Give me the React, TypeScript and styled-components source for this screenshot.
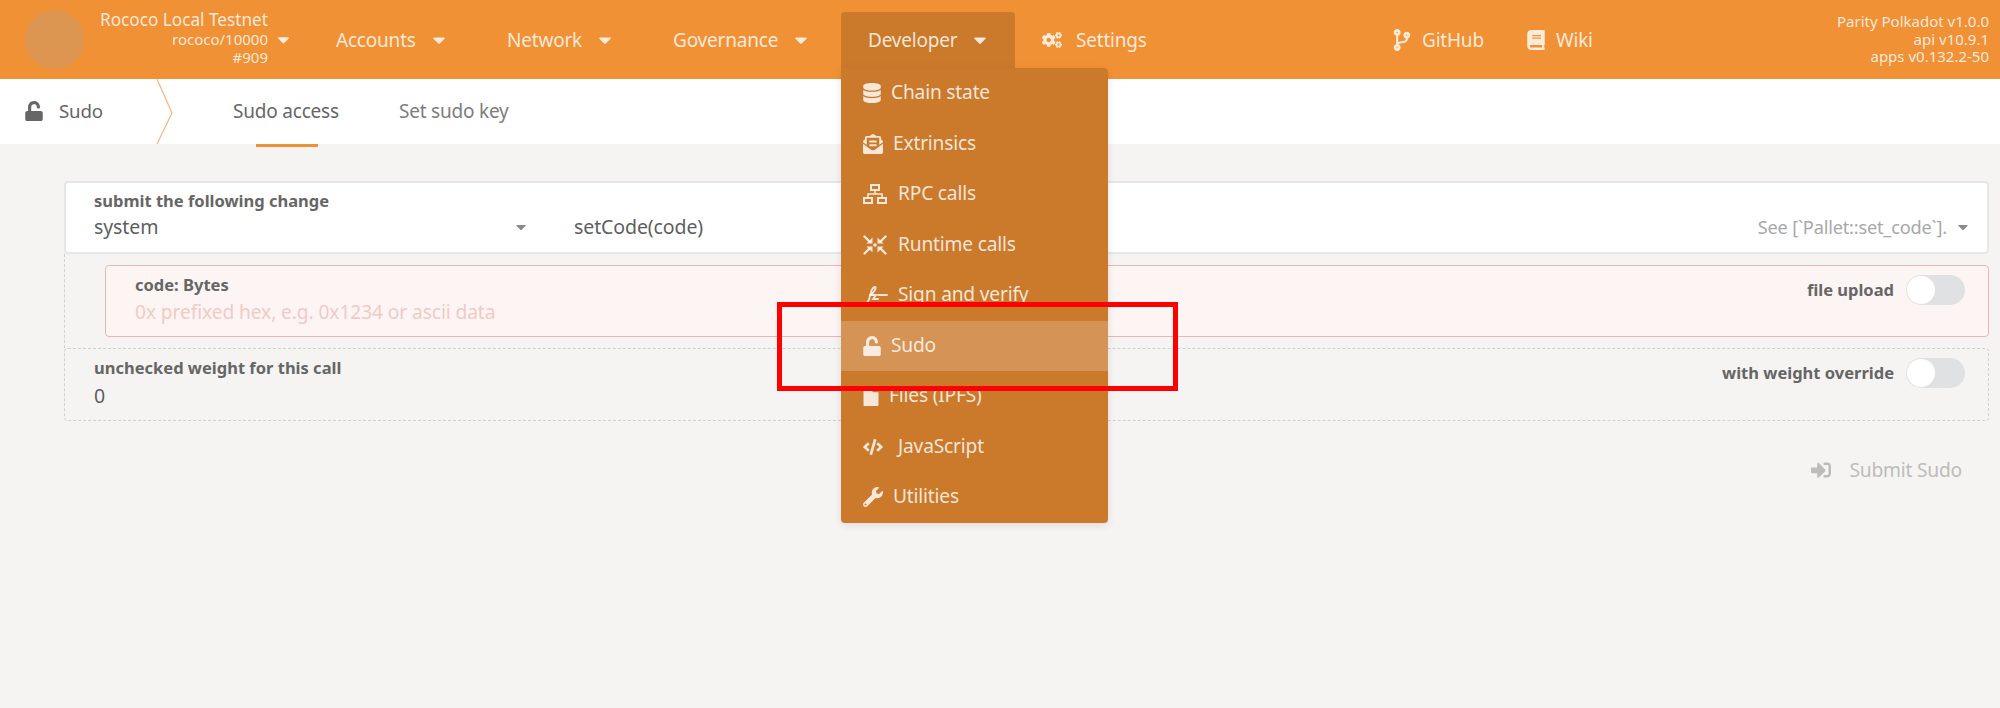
import * as React from 'react'
import styled, { createGlobalStyle } from 'styled-components'
import {
  FaBook, FaCaretDown, FaCode, FaCodeBranch, FaCogs, FaDatabase, FaEnvelopeOpenText,
  FaFile, FaSignInAlt, FaUnlock, FaWrench,
} from 'react-icons/fa'

const Global = createGlobalStyle`
  html, body { margin: 0; padding: 0; background: #f5f4f3; }
  body { font-family: "Noto Sans", "Open Sans", sans-serif; color: #5e5e5e; }
`

const Page = styled.div`
  position: relative;
  width: 2000px;
  height: 708px;
  overflow: hidden;
  background: #f5f4f3;
`

const Header = styled.header`
  display: flex;
  align-items: center;
  height: 79px;
  padding: 0 11px 0 25px;
  box-sizing: border-box;
  background: #f19135;
  color: rgba(255, 255, 255, 0.82);
  font-size: 19px;
  letter-spacing: -0.2px;
`

const Logo = styled.div`
  width: 59px;
  height: 59px;
  border-radius: 50%;
  background: #dd9552;
  margin-right: 15px;
`

const ChainInfo = styled.div`
  display: flex;
  flex-direction: column;
  align-items: flex-end;
  width: 169px;
  font-size: 15px;
  letter-spacing: 0;
  line-height: 18.5px;
  white-space: nowrap;
  margin-top: -1px;
`

const ChainName = styled.div`
  font-size: 17.2px;
`

const ChainRow = styled.div`
  position: relative;
`

const ChainCaret = styled(FaCaretDown)`
  position: absolute;
  left: calc(100% + 6px);
  top: 0;
  width: 19px;
  height: 19px;
`

const NavItem = styled.div<{ $w: number; $active?: boolean; $ml?: number }>`
  display: flex;
  align-items: center;
  gap: 13px;
  box-sizing: border-box;
  width: ${(p) => p.$w}px;
  margin-left: ${(p) => p.$ml ?? 0}px;
  padding-left: 27px;
  padding-bottom: ${(p) => (p.$active ? '12px' : '0')};
  white-space: nowrap;
  height: ${(p) => (p.$active ? '67px' : '79px')};
  align-self: flex-end;
  background: ${(p) => (p.$active ? '#cb7a2b' : 'transparent')};
  border-radius: 4px 4px 0 0;
`

const NavCaret = styled(FaCaretDown)`
  width: 20px;
  height: 20px;
`

const NavIcon = styled.span<{ $size?: number; $mr?: number }>`
  display: inline-flex;
  font-size: ${(p) => p.$size ?? 20}px;
  margin-right: ${(p) => p.$mr ?? -3}px;
`

const Version = styled.div`
  margin-left: auto;
  text-align: right;
  font-size: 15px;
  line-height: 17.5px;
  white-space: nowrap;
  letter-spacing: 0;
`

const Dropdown = styled.div`
  position: absolute;
  left: 841px;
  top: 68px;
  width: 267px;
  height: 455px;
  background: #cb7a2b;
  border-radius: 0 4px 4px 4px;
  box-shadow: 0 2px 8px rgba(0, 0, 0, 0.1);
  z-index: 3;
`

const MenuItem = styled.div<{ $active?: boolean }>`
  display: flex;
  align-items: center;
  gap: 10px;
  height: 50.5px;
  padding-left: 22px;
  color: rgba(255, 255, 255, 0.82);
  font-size: 19.2px;
  letter-spacing: -0.2px;
  background: ${(p) => (p.$active ? '#d59355' : 'transparent')};
`

const MenuLabel = styled.span`
  margin-top: -3px;
`

const MenuIcon = styled.span<{ $w: number }>`
  display: inline-flex;
  flex: none;
  width: ${(p) => p.$w}px;
  font-size: 20px;
`

const Highlight = styled.div`
  position: absolute;
  left: 777px;
  top: 302px;
  width: 401px;
  height: 89px;
  box-sizing: border-box;
  border: 5px solid #f00;
  z-index: 4;
`

const TabBar = styled.nav`
  display: flex;
  align-items: center;
  height: 65px;
  background: #fff;
`

const AppName = styled.div`
  display: flex;
  align-items: center;
  gap: 15px;
  width: 156px;
  padding-left: 24px;
  box-sizing: border-box;
  font-size: 18.7px;
  letter-spacing: -0.2px;
  color: #666;
  margin-top: -2px;
  svg { font-size: 20px; color: #666; }
`

const Chevron = styled.svg`
  width: 20px;
  height: 65px;
  flex: none;
  margin-right: 57px;
`

const Tab = styled.div<{ $active?: boolean }>`
  position: relative;
  font-size: 19px;
  line-height: 25px;
  letter-spacing: -0.2px;
  color: ${(p) => (p.$active ? '#666' : '#7d7d7d')};
  margin-right: 60px;
  white-space: nowrap;
  ${(p) =>
    p.$active &&
    `&::after {
      content: '';
      position: absolute;
      left: 23px;
      right: 21px;
      bottom: -23px;
      height: 3px;
      background: #f19135;
    }`}
`

const Content = styled.main`
  padding: 37px 11px 0 64px;
`

const Label = styled.div`
  font-size: 16.5px;
  line-height: 18px;
  font-weight: 700;
  color: #666;
  white-space: nowrap;
`

const Value = styled.div<{ $mt?: number }>`
  font-size: 19.5px;
  line-height: 24px;
  letter-spacing: -0.1px;
  color: #5e5e5e;
  margin-top: ${(p) => p.$mt ?? 0}px;
`

const CallCard = styled.section`
  height: 73px;
  box-sizing: border-box;
  padding: 9px 28px 0;
  background: #fff;
  border: 2px solid #e6e6e6;
  border-radius: 4px;
`

const CallRow = styled.div`
  display: flex;
  align-items: center;
  margin-top: 5px;
`

const ModuleCell = styled(Value)`
  display: flex;
  align-items: center;
  justify-content: space-between;
  width: 435px;
  margin-right: 45px;
`

const SmallCaret = styled(FaCaretDown)`
  width: 16px;
  height: 16px;
  color: #8a8a8a;
`

const Doc = styled.div`
  display: flex;
  align-items: center;
  gap: 8px;
  margin-left: auto;
  margin-right: -12px;
  font-size: 18.2px;
  letter-spacing: -0.2px;
  color: #a8a8a8;
  white-space: nowrap;
`

const Params = styled.div`
  padding: 11px 0 11px 40px;
  border-left: 1px dashed #d0d0d0;
`

const ParamCard = styled.section`
  display: flex;
  justify-content: space-between;
  height: 72px;
  box-sizing: border-box;
  padding: 10px 23px 0 29px;
  background: #fdf5f3;
  border: 1px solid #e9b6b6;
  border-radius: 4px;
`

const Placeholder = styled(Value)`
  margin-top: 6px;
  font-size: 19.2px;
  color: #f1c9c6;
`

const WeightCard = styled.section`
  display: flex;
  justify-content: space-between;
  height: 73px;
  box-sizing: border-box;
  padding: 10px 23px 0 29px;
  border: 1px dashed #d0d0d0;
  border-radius: 4px;
`

const ToggleRow = styled.div`
  display: flex;
  align-items: flex-start;
  gap: 12px;
  margin-top: -1px;
`

const ToggleLabel = styled(Label)`
  line-height: 30px;
`

const Toggle = styled.div`
  position: relative;
  width: 59px;
  height: 30px;
  border-radius: 15px;
  background: #e0e1e3;
  &::after {
    content: '';
    position: absolute;
    left: 1px;
    top: 1px;
    width: 28px;
    height: 28px;
    border-radius: 50%;
    background: #fff;
  }
`

const Actions = styled.div`
  display: flex;
  justify-content: flex-end;
  margin-top: 36px;
  padding-right: 27px;
`

const SubmitButton = styled.div`
  display: flex;
  align-items: center;
  gap: 18px;
  font-size: 19.2px;
  line-height: 26px;
  letter-spacing: -0.2px;
  color: #bcbcbc;
  svg { font-size: 20px; }
`

const NetworkIcon = () => (
  <svg width="24" height="20" viewBox="0 0 24 20" fill="none" stroke="currentColor" strokeWidth="2">
    <rect x="8" y="1" width="8" height="5" />
    <rect x="1" y="14" width="8" height="5" />
    <rect x="15" y="14" width="8" height="5" />
    <path d="M12 6v4M5 14v-4h14v4" strokeWidth="1.6" />
  </svg>
)

const RuntimeArrow = ({ flip }: { flip: string }) => (
  <g transform={flip}>
    <path d="M1.5 1.5L6.5 6.5" stroke="currentColor" strokeWidth="2.4" strokeLinecap="round" />
    <path d="M9.5 8.5H3.5L9.5 2.5Z" fill="currentColor" />
  </g>
)

const RuntimeIcon = () => (
  <svg width="24" height="20" viewBox="0 0 24 20">
    <RuntimeArrow flip="" />
    <RuntimeArrow flip="translate(24 0) scale(-1 1)" />
    <RuntimeArrow flip="translate(0 20) scale(1 -1)" />
    <RuntimeArrow flip="translate(24 20) scale(-1 -1)" />
    <circle cx="12" cy="10" r="1.8" fill="currentColor" />
  </svg>
)

const SignIcon = () => (
  <svg width="25" height="20" viewBox="0 0 25 20" fill="none" stroke="currentColor" strokeWidth="1.8" strokeLinecap="round">
    <path d="M1 18c3 1 5-2 6-7s2-9 5-9c2 0-1 6-5 8" />
    <path d="M7 10h6l-3 4h5" />
    <path d="M15 10h9M11 18h13" />
  </svg>
)

const menu = [
  { icon: <FaDatabase />, label: 'Chain state', w: 18 },
  { icon: <FaEnvelopeOpenText />, label: 'Extrinsics', w: 20 },
  { icon: <NetworkIcon />, label: 'RPC calls', w: 25 },
  { icon: <RuntimeIcon />, label: 'Runtime calls', w: 25 },
  { icon: <SignIcon />, label: 'Sign and verify', w: 25 },
  { icon: <FaUnlock />, label: 'Sudo', w: 18, active: true },
  { icon: <FaFile />, label: 'Files (IPFS)', w: 16 },
  { icon: <FaCode />, label: 'JavaScript', w: 25 },
  { icon: <FaWrench />, label: 'Utilities', w: 20 },
]

export default function App() {
  return (
    <Page>
      <Global />
      <Header>
        <Logo />
        <ChainInfo>
          <ChainName>Rococo Local Testnet</ChainName>
          <ChainRow>
            rococo/10000
            <ChainCaret />
          </ChainRow>
          <div>#909</div>
        </ChainInfo>
        <NavItem $w={162} $ml={41}>
          Accounts <NavCaret />
        </NavItem>
        <NavItem $w={166} $ml={9}>
          Network <NavCaret />
        </NavItem>
        <NavItem $w={195}>
          Governance <NavCaret />
        </NavItem>
        <NavItem $w={174} $active>
          Developer <NavCaret />
        </NavItem>
        <NavItem $w={349}>
          <NavIcon $mr={1}>
            <FaCogs />
          </NavIcon>
          Settings
        </NavItem>
        <NavItem $w={135}>
          <NavIcon $size={22} $mr={-4}>
            <FaCodeBranch />
          </NavIcon>
          GitHub
        </NavItem>
        <NavItem $w={120}>
          <NavIcon>
            <FaBook />
          </NavIcon>
          Wiki
        </NavItem>
        <Version>
          <div>Parity Polkadot v1.0.0</div>
          <div>api v10.9.1</div>
          <div>apps v0.132.2-50</div>
        </Version>
      </Header>
      <TabBar>
        <AppName>
          <FaUnlock />
          Sudo
        </AppName>
        <Chevron viewBox="0 0 20 65">
          <path d="M1 0 L16 34 L1 65" fill="none" stroke="#f9b47d" strokeWidth="1.2" />
        </Chevron>
        <Tab $active>Sudo access</Tab>
        <Tab>Set sudo key</Tab>
      </TabBar>
      <Content>
        <CallCard>
          <Label>submit the following change</Label>
          <CallRow>
            <ModuleCell>
              system
              <SmallCaret />
            </ModuleCell>
            <Value>setCode(code)</Value>
            <Doc>
              See [`Pallet::set_code`].
              <SmallCaret />
            </Doc>
          </CallRow>
        </CallCard>
        <Params>
          <ParamCard>
            <div>
              <Label>code: Bytes</Label>
              <Placeholder>0x prefixed hex, e.g. 0x1234 or ascii data</Placeholder>
            </div>
            <ToggleRow>
              <ToggleLabel>file upload</ToggleLabel>
              <Toggle />
            </ToggleRow>
          </ParamCard>
        </Params>
        <WeightCard>
          <div>
            <Label>unchecked weight for this call</Label>
            <Value $mt={7}>0</Value>
          </div>
          <ToggleRow>
            <ToggleLabel>with weight override</ToggleLabel>
            <Toggle />
          </ToggleRow>
        </WeightCard>
        <Actions>
          <SubmitButton>
            <FaSignInAlt />
            Submit Sudo
          </SubmitButton>
        </Actions>
      </Content>
      <Dropdown>
        {menu.map((m) => (
          <MenuItem key={m.label} $active={m.active}>
            <MenuIcon $w={m.w}>{m.icon}</MenuIcon>
            <MenuLabel>{m.label}</MenuLabel>
          </MenuItem>
        ))}
      </Dropdown>
      <Highlight />
    </Page>
  )
}
